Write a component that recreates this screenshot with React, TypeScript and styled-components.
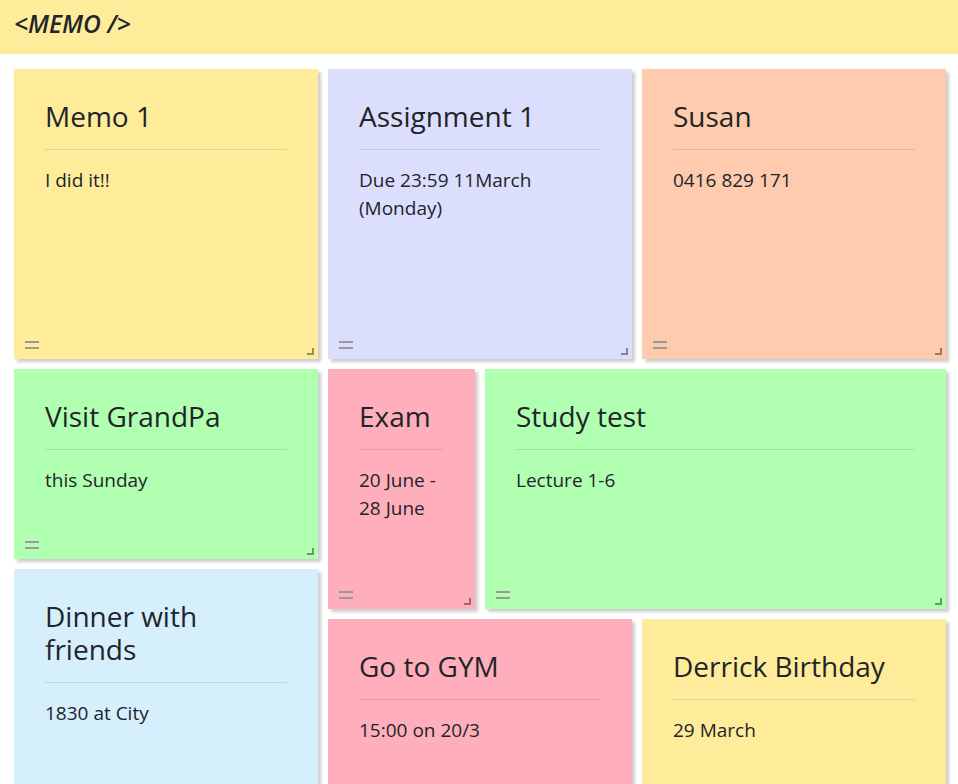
import React from "react";
import styled, { createGlobalStyle } from "styled-components";

const GlobalStyle = createGlobalStyle`
  html, body {
    margin: 0;
    padding: 0;
    overflow: hidden;
    background: #ffffff;
    font-family: "Open Sans", "Noto Sans", sans-serif;
    color: #212529;
  }
  * { box-sizing: border-box; }
`;

const Header = styled.header`
  height: 54px;
  background: #feec9b;
  display: flex;
  align-items: flex-start;
  padding: 7px 14px 0;
`;

const Logo = styled.h1`
  margin: 0;
  font-size: 24.5px;
  line-height: 1.362;
  font-weight: 600;
  font-style: italic;
  color: #212529;
`;

const Board = styled.main`
  display: grid;
  grid-template-columns: repeat(6, 147px);
  grid-auto-rows: 40px;
  gap: 10px;
  padding: 15px 14px 0;
`;

type Place = { col: number; row: number; w: number; h: number; bg: string };

const Card = styled.article<{ $p: Place }>`
  position: relative;
  grid-column: ${(p) => p.$p.col} / span ${(p) => p.$p.w};
  grid-row: ${(p) => p.$p.row} / span ${(p) => p.$p.h};
  background: ${(p) => p.$p.bg};
  box-shadow: 3px 3px 3px rgba(0, 0, 0, 0.2);
  padding: 31px 31px 0;
  display: flex;
  flex-direction: column;
`;

const Title = styled.h3`
  margin: 0;
  font-size: 28px;
  font-weight: 400;
  line-height: 33px;
`;

const Rule = styled.hr`
  margin: 16px 0 16px;
  border: 0;
  border-top: 1px solid rgba(0, 0, 0, 0.1);
`;

const Body = styled.p`
  margin: 0;
  font-size: 19px;
  line-height: 28px;
`;

const DragHandle = styled.span`
  position: absolute;
  left: 11px;
  bottom: 10px;
  width: 14px;
  height: 8px;
  border-top: 2px solid #9a9a9a;
  border-bottom: 2px solid #9a9a9a;
`;

const ResizeHandle = styled.span`
  position: absolute;
  right: 4px;
  bottom: 4px;
  width: 7px;
  height: 7px;
  border-right: 2px solid rgba(0, 0, 0, 0.4);
  border-bottom: 2px solid rgba(0, 0, 0, 0.4);
`;

const YELLOW = "#feec9b";
const LAVENDER = "#dcdefe";
const PEACH = "#fecbae";
const GREEN = "#b1ffb0";
const PINK = "#ffafbb";
const BLUE = "#d6effd";

const memos: { title: string; body: string; p: Place }[] = [
  { title: "Memo 1", body: "I did it!!", p: { col: 1, row: 1, w: 2, h: 6, bg: YELLOW } },
  { title: "Assignment 1", body: "Due 23:59 11March (Monday)", p: { col: 3, row: 1, w: 2, h: 6, bg: LAVENDER } },
  { title: "Susan", body: "0416 829 171", p: { col: 5, row: 1, w: 2, h: 6, bg: PEACH } },
  { title: "Visit GrandPa", body: "this Sunday", p: { col: 1, row: 7, w: 2, h: 4, bg: GREEN } },
  { title: "Exam", body: "20 June - 28 June", p: { col: 3, row: 7, w: 1, h: 5, bg: PINK } },
  { title: "Study test", body: "Lecture 1-6", p: { col: 4, row: 7, w: 3, h: 5, bg: GREEN } },
  { title: "Dinner with friends", body: "1830 at City", p: { col: 1, row: 11, w: 2, h: 6, bg: BLUE } },
  { title: "Go to GYM", body: "15:00 on 20/3", p: { col: 3, row: 12, w: 2, h: 5, bg: PINK } },
  { title: "Derrick Birthday", body: "29 March", p: { col: 5, row: 12, w: 2, h: 5, bg: YELLOW } },
];

export default function App() {
  return (
    <>
      <GlobalStyle />
      <Header>
        <Logo>&lt;MEMO /&gt;</Logo>
      </Header>
      <Board>
        {memos.map((m) => (
          <Card key={m.title} $p={m.p}>
            <Title>{m.title}</Title>
            <Rule />
            <Body>{m.body}</Body>
            <DragHandle />
            <ResizeHandle />
          </Card>
        ))}
      </Board>
    </>
  );
}
